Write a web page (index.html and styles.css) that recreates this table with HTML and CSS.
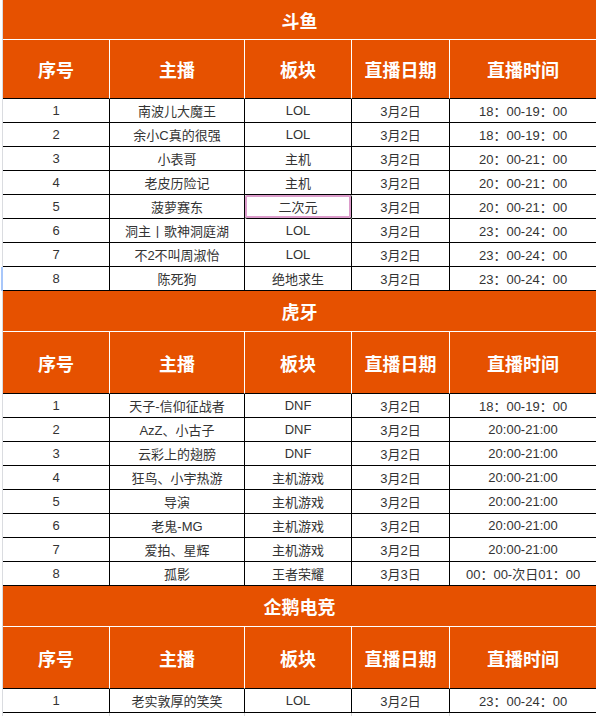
FILE: index.html
```html
<!DOCTYPE html>
<html lang="zh-CN">
<head>
<meta charset="utf-8">
<title>直播排期</title>
<link rel="stylesheet" href="styles.css">
</head>
<body>
<table class="sheet">
  <colgroup>
    <col class="c-gutter">
    <col class="c-no">
    <col class="c-host">
    <col class="c-cat">
    <col class="c-date">
    <col class="c-time">
  </colgroup>
  <tbody>
    <tr class="title first"><td class="g"></td><td colspan="5">斗鱼</td></tr>
    <tr class="head first"><td class="g"></td><td>序号</td><td>主播</td><td>板块</td><td>直播日期</td><td>直播时间</td></tr>
    <tr class="row"><td class="g"></td><td>1</td><td>南波儿大魔王</td><td>LOL</td><td>3月2日</td><td>18：00-19：00</td></tr>
    <tr class="row"><td class="g"></td><td>2</td><td>余小C真的很强</td><td>LOL</td><td>3月2日</td><td>18：00-19：00</td></tr>
    <tr class="row"><td class="g"></td><td>3</td><td>小表哥</td><td>主机</td><td>3月2日</td><td>20：00-21：00</td></tr>
    <tr class="row"><td class="g"></td><td>4</td><td>老皮历险记</td><td>主机</td><td>3月2日</td><td>20：00-21：00</td></tr>
    <tr class="row"><td class="g"></td><td>5</td><td>菠萝赛东</td><td class="selected">二次元</td><td>3月2日</td><td>20：00-21：00</td></tr>
    <tr class="row"><td class="g"></td><td>6</td><td>洞主丨歌神洞庭湖</td><td>LOL</td><td>3月2日</td><td>23：00-24：00</td></tr>
    <tr class="row"><td class="g"></td><td>7</td><td>不2不叫周淑怡</td><td>LOL</td><td>3月2日</td><td>23：00-24：00</td></tr>
    <tr class="row"><td class="g active"></td><td>8</td><td>陈死狗</td><td>绝地求生</td><td>3月2日</td><td>23：00-24：00</td></tr>
  </tbody>
  <tbody>
    <tr class="title"><td class="g"></td><td colspan="5">虎牙</td></tr>
    <tr class="head"><td class="g"></td><td>序号</td><td>主播</td><td>板块</td><td>直播日期</td><td>直播时间</td></tr>
    <tr class="row"><td class="g"></td><td>1</td><td>天子-信仰征战者</td><td>DNF</td><td>3月2日</td><td>18：00-19：00</td></tr>
    <tr class="row"><td class="g"></td><td>2</td><td>AzZ、小古子</td><td>DNF</td><td>3月2日</td><td>20:00-21:00</td></tr>
    <tr class="row"><td class="g"></td><td>3</td><td>云彩上的翅膀</td><td>DNF</td><td>3月2日</td><td>20:00-21:00</td></tr>
    <tr class="row"><td class="g"></td><td>4</td><td>狂鸟、小宇热游</td><td>主机游戏</td><td>3月2日</td><td>20:00-21:00</td></tr>
    <tr class="row"><td class="g"></td><td>5</td><td>导演</td><td>主机游戏</td><td>3月2日</td><td>20:00-21:00</td></tr>
    <tr class="row"><td class="g"></td><td>6</td><td>老鬼-MG</td><td>主机游戏</td><td>3月2日</td><td>20:00-21:00</td></tr>
    <tr class="row"><td class="g"></td><td>7</td><td>爱拍、星辉</td><td>主机游戏</td><td>3月2日</td><td>20:00-21:00</td></tr>
    <tr class="row"><td class="g"></td><td>8</td><td>孤影</td><td>王者荣耀</td><td>3月3日</td><td>00：00-次日01：00</td></tr>
  </tbody>
  <tbody>
    <tr class="title"><td class="g"></td><td colspan="5">企鹅电竞</td></tr>
    <tr class="head"><td class="g"></td><td>序号</td><td>主播</td><td>板块</td><td>直播日期</td><td>直播时间</td></tr>
    <tr class="row"><td class="g"></td><td>1</td><td>老实敦厚的笑笑</td><td>LOL</td><td>3月2日</td><td>23：00-24：00</td></tr>
    <tr class="empty"><td class="g"></td><td></td><td></td><td></td><td></td><td></td></tr>
  </tbody>
</table>
</body>
</html>
```

FILE: styles.css
```css
html, body {
  margin: 0;
  padding: 0;
  background: #ffffff;
}

body {
  font-family: "Liberation Sans", "Noto Sans CJK SC", sans-serif;
  overflow: hidden;
}

.sheet {
  table-layout: fixed;
  width: 596px;
  border-collapse: separate;
  border-spacing: 0;
}

.c-gutter { width: 3px; }
.c-no { width: 107px; }
.c-host { width: 135px; }
.c-cat { width: 107px; }
.c-date { width: 98px; }
.c-time { width: 146px; }

.sheet td {
  box-sizing: border-box;
  padding: 0;
  text-align: center;
  vertical-align: middle;
  white-space: nowrap;
  overflow: hidden;
}

.sheet td.g {
  background: #ffffff;
  border-right: 1px solid #dadce0;
  border-bottom: 0;
}

.sheet td.g.active {
  border-right: 1px solid #a8c7fa;
  box-shadow: inset -1px 0 0 #a8c7fa;
}

.title td {
  height: 41px;
  background: #e65100;
  color: #ffffff;
  font-weight: bold;
  font-size: 18px;
  font-family: "Noto Sans CJK SC", "Liberation Sans", sans-serif;
  border-bottom: 1px solid #ffffff;
}

.title.first td {
  height: 40px;
}

.head td {
  height: 62px;
  background: #e65100;
  color: #ffffff;
  font-weight: bold;
  font-size: 18px;
  font-family: "Noto Sans CJK SC", "Liberation Sans", sans-serif;
  border-right: 1px solid #ffffff;
  border-bottom: 1px solid #000000;
}

.head.first td {
  height: 59px;
}

.row td {
  height: 24px;
  font-size: 13px;
  color: #333333;
  border-right: 1px solid #000000;
  border-bottom: 1px solid #000000;
}

.row td:last-child,
.head td:last-child {
  border-right: 0;
}

.row td.selected {
  box-shadow: inset 0 0 0 2px #dc9ccb;
  border-radius: 2px;
}

.empty td {
  height: 24px;
  border-right: 1px solid #d9d9d9;
}

.empty td:last-child {
  border-right: 0;
}
```
